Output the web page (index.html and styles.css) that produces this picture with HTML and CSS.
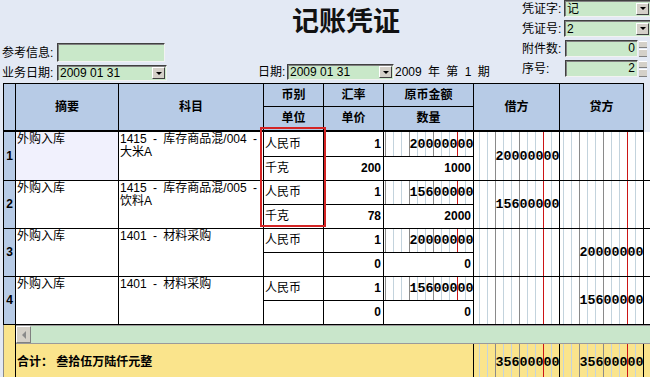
FILE: index.html
```html
<!DOCTYPE html>
<html lang="zh-CN">
<head>
    <meta charset="UTF-8">
    <meta name="viewport" content="width=device-width, initial-scale=1.0">
    <title>记账凭证</title>
    <link rel="stylesheet" href="styles.css">
</head>
<body>
    <div class="top">
        <div class="top-left">
            <div class="field ref-row">
                <span class="label">参考信息:</span>
                <div class="input ref"></div>
            </div>
            <div class="field">
                <span class="label">业务日期:</span>
                <div class="input select biz-date"><span>2009 01 31</span><span class="drop"></span></div>
            </div>
        </div>
        <div class="top-mid">
            <h1 class="title">记账凭证</h1>
            <div class="field date-row">
                <span class="label">日期:</span>
                <div class="input select date"><span>2009 01 31</span><span class="drop"></span></div>
                <span class="period">2009 年 第 1 期</span>
            </div>
        </div>
        <div class="top-right">
            <div class="field">
                <span class="label">凭证字:</span>
                <div class="input select wide"><span>记</span><span class="drop"></span></div>
            </div>
            <div class="field">
                <span class="label">凭证号:</span>
                <div class="input select wide"><span>2</span><span class="drop"></span></div>
            </div>
            <div class="field">
                <span class="label">附件数:</span>
                <div class="input count">0</div>
                <span class="spin"><i></i><i></i></span>
            </div>
            <div class="field">
                <span class="label">序号:</span>
                <div class="input count">2</div>
                <span class="spin"><i></i><i></i></span>
            </div>
        </div>
    </div>

    <div class="sheet">
        <div class="voucher">
            <!-- header -->
            <div class="h num tall"></div>
            <div class="h tall">摘要</div>
            <div class="h tall">科目</div>
            <div class="h split">币别</div>
            <div class="h split">汇率</div>
            <div class="h split">原币金额</div>
            <div class="h tall">借方</div>
            <div class="h tall">贷方</div>
            <div class="pad-head tall"></div>
            <div class="h sub">单位</div>
            <div class="h sub">单价</div>
            <div class="h sub">数量</div>

            <!-- entry 1 -->
            <div class="c num tall">1</div>
            <div class="c desc active tall">外购入库</div>
            <div class="c acct tall">1415 - 库存商品混/004 -<br>大米A</div>
            <div class="c cur">人民币</div>
            <div class="c val">1</div>
            <div class="c money">20000000</div>
            <div class="c money tall">20000000</div>
            <div class="c money tall"></div>
            <div class="c pad tall"></div>
            <div class="c cur">千克</div>
            <div class="c val">200</div>
            <div class="c val">1000</div>

            <!-- entry 2 -->
            <div class="c num tall">2</div>
            <div class="c desc tall">外购入库</div>
            <div class="c acct tall">1415 - 库存商品混/005 -<br>饮料A</div>
            <div class="c cur">人民币</div>
            <div class="c val">1</div>
            <div class="c money">15600000</div>
            <div class="c money tall">15600000</div>
            <div class="c money tall"></div>
            <div class="c pad tall"></div>
            <div class="c cur">千克</div>
            <div class="c val">78</div>
            <div class="c val">2000</div>

            <!-- entry 3 -->
            <div class="c num tall">3</div>
            <div class="c desc tall">外购入库</div>
            <div class="c acct tall">1401 - 材料采购</div>
            <div class="c cur">人民币</div>
            <div class="c val">1</div>
            <div class="c money">20000000</div>
            <div class="c money tall"></div>
            <div class="c money tall">20000000</div>
            <div class="c pad tall"></div>
            <div class="c cur"></div>
            <div class="c val">0</div>
            <div class="c val">0</div>

            <!-- entry 4 -->
            <div class="c num tall">4</div>
            <div class="c desc tall">外购入库</div>
            <div class="c acct tall">1401 - 材料采购</div>
            <div class="c cur">人民币</div>
            <div class="c val">1</div>
            <div class="c money">15600000</div>
            <div class="c money tall"></div>
            <div class="c money tall">15600000</div>
            <div class="c pad tall"></div>
            <div class="c cur"></div>
            <div class="c val">0</div>
            <div class="c val">0</div>

            <!-- horizontal scroll bar -->
            <div class="side"></div>
            <div class="scroll"><span class="arrow-btn"></span></div>

            <!-- total -->
            <div class="side"></div>
            <div class="sum-text">合计： 叁拾伍万陆仟元整</div>
            <div class="c money sum">35600000</div>
            <div class="c money sum">35600000</div>
            <div class="sum-pad"></div>
        </div>
        <div class="mark"></div>
    </div>

    <script src="script.js"></script>
</body>
</html>
```

FILE: styles.css
```css
body {
    margin: 0;
    width: 650px;
    height: 377px;
    overflow: hidden;
    background-color: #e3e9f4;
    font-family: "Liberation Sans", "Noto Sans CJK SC", sans-serif;
    font-size: 12px;
    color: #000;
}

/* top area */
.top {
    display: flex;
    height: 83px;
}

.top-left {
    width: 256px;
    padding: 43px 0 0 2px;
    display: flex;
    flex-direction: column;
    gap: 3px;
}

.top-mid {
    width: 264px;
    display: flex;
    flex-direction: column;
}

.top-right {
    width: 128px;
    display: flex;
    flex-direction: column;
    gap: 3px;
}

.field {
    display: flex;
    align-items: center;
    height: 16px;
    line-height: 16px;
    white-space: nowrap;
}

.ref-row {
    height: 19px;
}

.label {
    flex-shrink: 0;
}

.top-left .label {
    width: 55px;
}

.top-right .field {
    height: 17px;
}

.top-right .label {
    width: 42px;
}

.input {
    box-sizing: border-box;
    flex-shrink: 0;
    height: 100%;
    background-color: #c9e8c9;
    border-top: 1px solid #404040;
    border-left: 1px solid #404040;
    border-right: 1px solid #f2f2f2;
    border-bottom: 1px solid #f2f2f2;
    box-shadow: inset 1px 1px 0 #808080;
    padding-left: 2px;
    line-height: 14px;
}

.ref {
    width: 108px;
}

.select {
    display: flex;
    align-items: center;
    justify-content: space-between;
    padding-right: 1px;
}

.biz-date {
    width: 110px;
}

.date {
    width: 107px;
}

.wide {
    width: 88px;
    padding-right: 2px;
}

.drop {
    box-sizing: border-box;
    width: 13px;
    height: 12px;
    background-color: #d4d0c8;
    border-top: 1px solid #fff;
    border-left: 1px solid #fff;
    border-right: 1px solid #404040;
    border-bottom: 1px solid #404040;
    display: flex;
    align-items: center;
    justify-content: center;
}

.drop::after {
    content: "";
    border-left: 3px solid transparent;
    border-right: 3px solid transparent;
    border-top: 3px solid #000;
}

.count {
    width: 73px;
    text-align: right;
    padding-right: 2px;
    margin-left: 1px;
}

.spin {
    width: 8px;
    height: 16px;
    display: flex;
    flex-direction: column;
    gap: 1px;
    margin-left: 1px;
}

.spin i {
    flex: 1;
    background-color: #d4d0c8;
    border-bottom: 1px solid #808080;
    border-top: 1px solid #fff;
}

.title {
    margin: 9px 0 0 34px;
    font-size: 27px;
    line-height: 27px;
    font-weight: bold;
    color: #111;
}

.date-row {
    margin-top: auto;
    margin-bottom: 3px;
}

.date-row .label {
    width: 29px;
}

.period {
    margin-left: 1px;
    word-spacing: 3px;
}

/* voucher grid */
.sheet {
    position: relative;
}

.voucher {
    display: grid;
    grid-template-columns: 13px 103px 145px 60px 60px 90px 86px 84px 6px;
    grid-template-rows: 24px 25px 25px 24px 24px 24px 24px 24px 24px 24px 19px 36px;
    margin-left: 3px;
    width: 647px;
}

.voucher > div {
    box-sizing: border-box;
    overflow: hidden;
    white-space: nowrap;
    line-height: 13px;
}

.tall {
    grid-row: span 2;
}

.h {
    display: flex;
    align-items: center;
    justify-content: center;
    background-color: #b7cbe6;
    font-weight: bold;
    border-top: 1px solid #000;
    border-right: 1px solid #000;
    border-bottom: 2px solid #000;
}

.h.split {
    border-bottom-width: 1px;
}

.h.sub {
    border-top: none;
}

.c {
    background-color: #fff;
    border-right: 1px solid #000;
    border-bottom: 1px solid #000;
    padding: 0 1px;
}

.num {
    border-left: 1px solid #000;
}

.c.num {
    display: flex;
    align-items: center;
    justify-content: center;
    padding: 0;
    background-color: #b7cbe6;
    font-weight: bold;
}

.desc,
.acct {
    padding-top: 1px;
}

.c.active {
    background-color: #f1f1fd;
}

.acct {
    word-spacing: 3px;
}

.cur {
    display: flex;
    align-items: center;
}

.val {
    display: flex;
    align-items: center;
    justify-content: flex-end;
    font-weight: bold;
}

.c.val {
    padding-right: 2px;
}

.c.pad {
    border-right: none;
}

/* money cells: one slot per digit, thousands lines and the red decimal line */
.c.money {
    display: flex;
    justify-content: flex-end;
    padding: 0;
    font-family: "Liberation Mono", monospace;
    font-size: 13.33px;
    font-weight: bold;
}

.slot {
    box-sizing: border-box;
    flex-shrink: 0;
    width: 8px;
    display: flex;
    align-items: center;
    justify-content: center;
    border-left: 1px solid #c3d3dd;
}

.slot.sep {
    border-left-color: #8a8a8a;
}

.slot.dec {
    border-left-color: #cc1414;
}

.c.money.sum {
    background-color: #fae48c;
    border-bottom: none;
}

/* scroll bar and total */
.side {
    background-color: #fae48c;
    border-left: 1px solid #8a8a8a;
    border-right: 1px solid #000;
}

.scroll {
    grid-column: span 8;
    background-color: #c9e6cb;
    border-top: 1px solid #9a9a9a;
    border-bottom: 1px solid #9a9a9a;
}

.arrow-btn {
    box-sizing: border-box;
    display: flex;
    align-items: center;
    justify-content: center;
    width: 15px;
    height: 17px;
    background-color: #d4d0c8;
    border-top: 1px solid #fff;
    border-left: 1px solid #fff;
    border-right: 1px solid #808080;
    border-bottom: 1px solid #808080;
}

.arrow-btn::after {
    content: "";
    border-top: 4px solid transparent;
    border-bottom: 4px solid transparent;
    border-right: 4px solid #8a8a8a;
}

.sum-text {
    grid-column: span 5;
    display: flex;
    align-items: center;
    padding-left: 1px;
    background-color: #fae48c;
    border-right: 1px solid #000;
    font-weight: bold;
}

.sum-pad {
    background-color: #fae48c;
}

.mark {
    position: absolute;
    left: 260px;
    top: 44px;
    width: 66px;
    height: 100px;
    box-sizing: border-box;
    border: 2px solid #d42424;
}
```

FILE: script.js
```js
// split every amount into 8px digit slots, counted from the right:
// slot 2 carries the red decimal line, every third slot after it a thousands line
document.querySelectorAll('.money').forEach(function (cell) {
    var text = cell.textContent.trim();
    var count = Math.floor(cell.clientWidth / 8);
    cell.textContent = '';
    for (var i = count; i >= 1; i--) {
        var slot = document.createElement('span');
        slot.className = 'slot';
        if (i === 2) {
            slot.className += ' dec';
        } else if (i % 3 === 2) {
            slot.className += ' sep';
        }
        var idx = text.length - i;
        slot.textContent = idx >= 0 ? text.charAt(idx) : '';
        cell.appendChild(slot);
    }
});
```
